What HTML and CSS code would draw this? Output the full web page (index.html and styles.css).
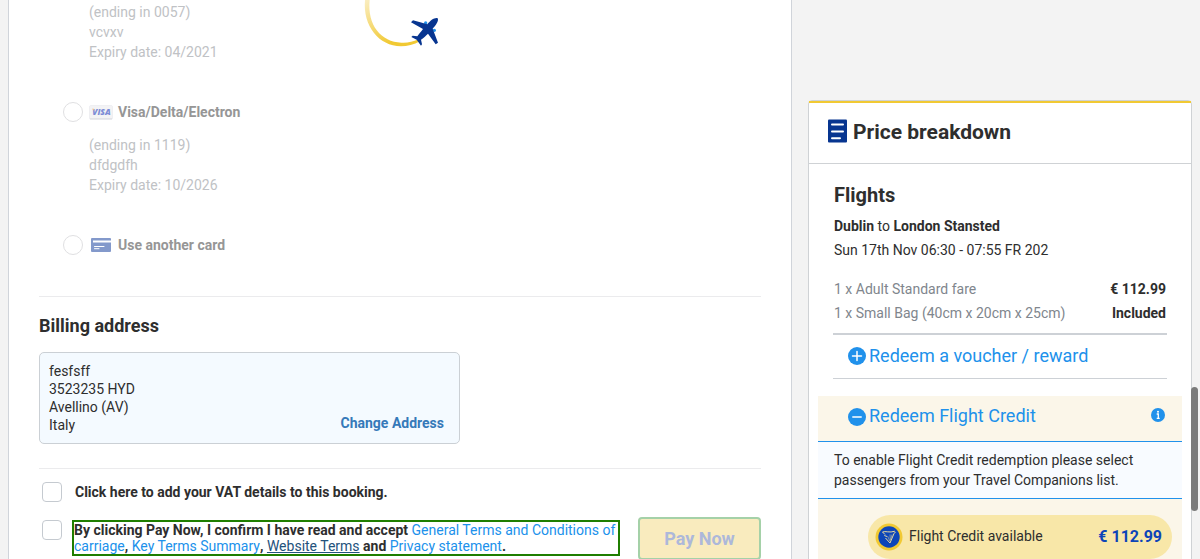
FILE: index.html
```html
<!DOCTYPE html>
<html lang="en">
<head>
<meta charset="utf-8">
<title>Payment</title>
<link rel="stylesheet" href="styles.css">
</head>
<body>
<div class="page">
  <main class="payment">
    <svg class="spinner" viewBox="0 0 390 180" width="130" height="60">
      <defs>
        <linearGradient id="fade" x1="80" y1="0" x2="150" y2="130" gradientUnits="userSpaceOnUse">
          <stop offset="0" stop-color="#faedbf"/>
          <stop offset="1" stop-color="#f1c933"/>
        </linearGradient>
      </defs>
      <path d="M75 0C68 78 117 138 183 139C202 139 222 134 240 124L235 118C219 126 202 129 184 128C124 126 81 76 89 0Z" fill="url(#fade)"/>
      <circle cx="257" cy="69" r="5" fill="#2091eb"/>
      <circle cx="283" cy="91" r="5" fill="#2091eb"/>
      <path d="M291 54C282 53 270 62 262 73L219 61L213 67L249 87C242 96 236 103 232 109L218 107L214 111L230 119L243 137L246 133L243 119C250 114 258 107 264 101L287 133L294 128L278 86C288 76 297 62 293 55Z" fill="#073590"/>
    </svg>
    <section class="cards">
      <div class="card-info">(ending in 0057)<br>vcvxv<br>Expiry date: 04/2021</div>
      <div class="option">
        <span class="radio"></span>
        <span class="brand">
          <svg width="24" height="15" viewBox="0 0 24 15"><rect x=".5" y=".5" width="23" height="14" rx="1.5" fill="#f3f3f5" stroke="#efeff2"/><rect y="13" x="1" width="22" height="1.5" fill="#e2e3e7"/><text x="3.200" y="9.900" class="visa" textLength="18.500" lengthAdjust="spacingAndGlyphs">VISA</text><path d="M3 3.700H4.800L5.400 6Z" fill="#f5bf80"/></svg>
        </span>
        <span class="option-name">Visa/Delta/Electron</span>
      </div>
      <div class="card-info">(ending in 1119)<br>dfdgdfh<br>Expiry date: 10/2026</div>
      <div class="option">
        <span class="radio"></span>
        <span class="brand generic">
          <svg width="20" height="14" viewBox="0 0 20 14"><rect width="20" height="14" rx="1" fill="#8399cb"/><path d="M2 3.500H20" stroke="#fff" stroke-width="2"/><path d="M3.500 8.500H13M3.500 10.700H8" stroke="#fff" stroke-linecap="round"/></svg>
        </span>
        <span class="option-name">Use another card</span>
      </div>
    </section>
    <section class="billing">
      <h3>Billing address</h3>
      <div class="address">
        <div>fesfsff<br>3523235 HYD<br>Avellino (AV)<br>Italy</div>
        <a class="change">Change Address</a>
      </div>
    </section>
    <section class="confirm">
      <div class="vat"><span class="check"></span><b>Click here to add your VAT details to this booking.</b></div>
      <div class="accept">
        <span class="check"></span>
        <div class="terms"><div>By clicking Pay Now, I confirm I have read and accept <a>General Terms and Conditions of</a></div><div><a>carriage</a>, <a>Key Terms Summary</a>, <a class="hover">Website Terms</a> and <a>Privacy statement</a>.</div></div>
        <button class="pay">Pay Now</button>
      </div>
    </section>
  </main>
  <aside class="breakdown">
    <header>
      <svg width="19" height="24" viewBox="0 0 19 24"><rect y=".500" width="19" height="23" rx="1" fill="#073590"/><path d="M4 5.500H15M4 12.500H15M4 19.200H12" stroke="#fff" stroke-width="2" stroke-linecap="round"/></svg>
      <h2 class="title">Price breakdown</h2>
    </header>
    <div class="flights">
      <h2>Flights</h2>
      <p class="route"><b>Dublin</b> to <b>London Stansted</b></p>
      <p class="time">Sun 17th Nov 06:30 - 07:55 FR 202</p>
      <div class="item first"><span>1 x Adult Standard fare</span><b>€ 112.99</b></div>
      <div class="item"><span>1 x Small Bag (40cm x 20cm x 25cm)</span><b>Included</b></div>
      <div class="voucher">
        <svg width="18" height="18" viewBox="0 0 18 18"><circle cx="9" cy="9" r="9" fill="#2091eb"/><path d="M4.500 9H13.500M9 4.500V13.500" stroke="#fff" stroke-width="1.500" stroke-linecap="round"/></svg>
        <span>Redeem a voucher / reward</span>
      </div>
    </div>
    <div class="credit">
      <div class="credit-head">
        <svg width="18" height="18" viewBox="0 0 18 18"><circle cx="9" cy="9" r="9" fill="#2091eb"/><path d="M4.800 9H13.200" stroke="#fff" stroke-width="1.500" stroke-linecap="round"/></svg>
        <span>Redeem Flight Credit</span>
        <svg class="info" width="14" height="14" viewBox="0 0 14 14"><circle cx="7" cy="7" r="7" fill="#2091eb"/><path d="M5.700 6H7.300V10.300M5.700 10.300H8.700" stroke="#fff" stroke-width="1.300" fill="none"/><circle cx="7" cy="3.800" r="1" fill="#fff"/></svg>
      </div>
      <p class="notice">To enable Flight Credit redemption please select<br>passengers from your Travel Companions list.</p>
      <div class="pill">
        <svg width="28" height="28" viewBox="0 0 28 28"><circle cx="14" cy="14" r="13.500" fill="#f1c933"/><circle cx="14" cy="14" r="10.700" fill="#0d45b8"/><path d="M7.500 9C10 7.800 15 10 19.500 8.300C20.800 9 20 10 18.800 10.500M7.500 9L10 11.500M9.300 12.500L12 13.500M10.500 15L15 20L19 10.500" fill="none" stroke="#e9d9a0"/><path d="M12.500 13L14.800 18M15 11.500L15.300 17.500M17 11.500L15.700 17" stroke="#c9c5a4" stroke-width=".600"/></svg>
        <span>Flight Credit available</span>
        <b>€ 112.99</b>
      </div>
    </div>
  </aside>
  <div class="scrollbar"></div>
</div>
</body>
</html>
```
FILE: styles.css
```css
* { box-sizing: border-box; }
body { margin: 0; font: 14px/20px Roboto, sans-serif; color: #2e2e2e; background: #f3f3f3; }
h2, h3, p { margin: 0; }
svg { display: block; flex: none; }
.page { position: relative; display: flex; align-items: flex-start; gap: 16px; height: 559px; padding-left: 8px; overflow: hidden; }

.payment { position: relative; width: 784px; height: 572px; padding: 0 30px; background: #fff; border: solid #d0d4da; border-width: 0 1px; }
.spinner { position: absolute; left: 331px; top: 0; }
.cards { height: 297px; padding: 2px 0 0 24px; border-bottom: 1px solid #ebebed; }
.card-info { padding-left: 26px; color: #c0c2c5; }
.option { display: flex; align-items: center; height: 20px; margin: 40px 0 13px; }
.radio { width: 20px; height: 20px; border: 1px solid #e0e0e2; border-radius: 50%; }
.brand { width: 24px; margin: 0 5px 0 6px; }
.generic { padding-left: 2px; }
.visa { font: italic 800 8.500px "Open Sans", sans-serif; fill: #7d8cd6; }
.option-name { font-weight: 700; color: #969696; }
.billing { height: 172px; padding-top: 19px; border-bottom: 1px solid #ebebed; }
.billing h3 { margin-bottom: 16px; font-size: 18px; line-height: 20px; }
.address { display: flex; justify-content: space-between; align-items: flex-end; width: 421px; height: 92px; padding: 9px 15px 9px 9px; line-height: 18px; background: #f4faff; border: 1px solid #cbd0d5; border-radius: 5px; }
.change { padding-bottom: 2px; font-weight: 700; color: #3579b9; }
.confirm { padding: 13px 0 0 3px; }
.check { flex: none; width: 20px; height: 20px; background: #fff; border: 1px solid #c5cad0; border-radius: 4px; }
.vat { display: flex; gap: 13px; }
.accept { display: flex; align-items: flex-start; margin-top: 15px; }
.accept .check { margin-top: 3px; }
.terms { flex: none; width: 548px; height: 36px; margin: 3px 18px 0 10px; border: 2px solid #1f7e00; font-weight: 700; line-height: 16px; white-space: nowrap; }
.terms a { font-weight: 400; color: #2091eb; }
.terms .hover { color: #23527c; text-decoration: underline; }
.pay { flex: none; width: 123px; height: 43px; padding: 0; font: 700 18px Roboto, sans-serif; color: #adb8da; background: #f9ebbe; border: 2px solid #a5d1a8; border-radius: 4px; }

.breakdown { width: 384px; height: 480px; margin-top: 100px; background: #fff; border: 1px solid #cfd2d5; border-radius: 4px; }
.breakdown header { display: flex; align-items: center; gap: 6px; height: 63px; padding-left: 19px; padding-bottom: 4px; border-top: 2px solid #f1c933; border-bottom: 1px solid #cfd2d5; }
.breakdown h2 { font-size: 20px; line-height: 24px; }
.breakdown .title { padding-top: 2px; font-size: 21px; }
.flights { padding: 19px 24px 0 25px; }
.route { margin-top: 9px; line-height: 20px; }
.time { margin-top: 4px; }
.item { display: flex; justify-content: space-between; width: 332px; margin-top: 4px; }
.item.first { margin-top: 19px; }
.item span { color: #80868d; }
.voucher { display: flex; align-items: center; gap: 3px; height: 46px; margin: 10px 0 0 -1px; padding: 0 0 1px 15px; border-top: 2px solid #cdd1d6; border-bottom: 1px solid #cdd1d6; font-size: 18px; color: #2091eb; }
.voucher span, .credit-head span { padding-bottom: 1px; }
.credit { height: 180px; margin: 17px 9px 0; background: #fbf6e9; }
.credit-head { display: flex; align-items: center; gap: 3px; height: 45px; padding: 0 17px 4px 30px; font-size: 18px; color: #2091eb; }
.info { margin: 0 0 3px auto; }
.notice { height: 58px; padding: 8px 16px; border: solid #2091eb; border-width: 1px 0; background: #f8fbff; }
.pill { display: flex; align-items: center; width: 304px; height: 44px; margin: 16px 0 0 50px; padding: 0 10px 0 7px; border-radius: 22px; background: #f8e7a8; }
.pill span { margin-left: 6px; padding-bottom: 2px; }
.pill b { margin-left: auto; font-size: 16px; color: #0d45b8; }

.scrollbar { position: absolute; left: 1191px; top: 387px; width: 7px; height: 124px; border-radius: 4px; background: #7b7b7b; }
```
